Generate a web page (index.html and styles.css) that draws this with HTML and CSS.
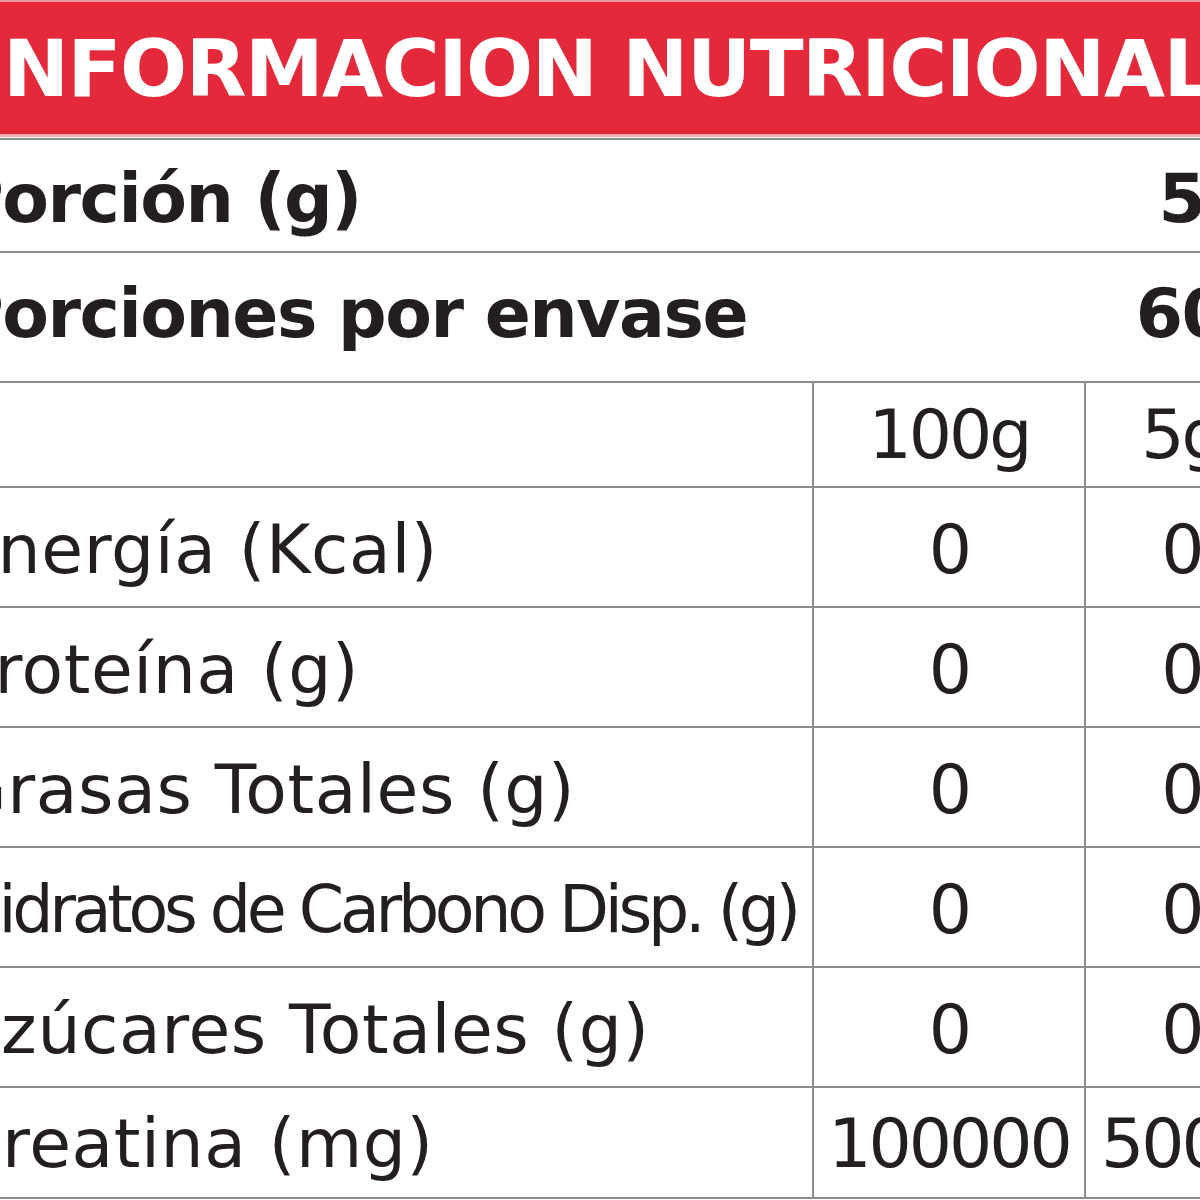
FILE: index.html
```html
<!DOCTYPE html>
<html lang="es">
<head>
<meta charset="utf-8">
<link rel="stylesheet" href="styles.css">
</head>
<body>
<div class="viewport">
  <div class="sheet">
    <div class="title-wrap">
      <div class="title">INFORMACION NUTRICIONAL</div>
    </div>
    <div class="row bold r-portion">
      <div class="lbl span2">Porción (g)</div>
      <div class="val">5</div>
    </div>
    <div class="row bold r-portions">
      <div class="lbl span2">Porciones por envase</div>
      <div class="val">60</div>
    </div>
    <div class="row thead">
      <div class="lbl"></div>
      <div class="num bl">100g</div>
      <div class="num bl c3">5g</div>
    </div>
    <div class="row data">
      <div class="lbl">Energía (Kcal)</div>
      <div class="num bl">0</div>
      <div class="num bl c3">0</div>
    </div>
    <div class="row data">
      <div class="lbl">Proteína (g)</div>
      <div class="num bl">0</div>
      <div class="num bl c3">0</div>
    </div>
    <div class="row data">
      <div class="lbl">Grasas Totales (g)</div>
      <div class="num bl">0</div>
      <div class="num bl c3">0</div>
    </div>
    <div class="row data">
      <div class="lbl narrow">Hidratos de Carbono Disp. (g)</div>
      <div class="num bl">0</div>
      <div class="num bl c3">0</div>
    </div>
    <div class="row data">
      <div class="lbl">Azúcares Totales (g)</div>
      <div class="num bl">0</div>
      <div class="num bl c3">0</div>
    </div>
    <div class="row data last">
      <div class="lbl">Creatina (mg)</div>
      <div class="num bl">100000</div>
      <div class="num bl c3">5000</div>
    </div>
  </div>
</div>
</body>
</html>
```
FILE: styles.css
```css
html, body {
  margin: 0;
  padding: 0;
  background: #ffffff;
  overflow: hidden;
}

.viewport {
  width: 1200px;
  height: 1200px;
  overflow: hidden;
  background: #ffffff;
}

.sheet {
  width: 1347px;
  margin-left: -60px;
  font-family: "DejaVu Sans", "Liberation Sans", sans-serif;
  color: #231f20;
}

.title-wrap {
  box-sizing: border-box;
  height: 140px;
  border-bottom: 2px solid #8c8c8c;
  padding-bottom: 1px;
  background: #ffffff;
}

.title {
  box-sizing: border-box;
  height: 137px;
  background: #e4293b;
  border-top: 2px solid #f29aa3;
  border-bottom: 3px solid #f3aab1;
  color: #ffffff;
  font-weight: bold;
  font-size: 79px;
  letter-spacing: -1.5px;
  white-space: nowrap;
  display: flex;
  align-items: center;
  padding-left: 35px;
  padding-top: 2px;
}

.row {
  box-sizing: border-box;
  display: grid;
  grid-template-columns: 872px 272px 203px;
  border-bottom: 2px solid #8c8c8c;
}

.r-portion { height: 113px; padding-top: 5px; }
.r-portions { height: 130px; padding-bottom: 8px; }
.thead { height: 105px; }
.data { height: 120px; }
.data.last { height: 111px; }

.data > div { padding-top: 4px; }
.data.last > div { padding-top: 2px; }

.lbl {
  display: flex;
  align-items: center;
  padding-left: 14px;
  white-space: nowrap;
  font-size: 68px;
  letter-spacing: 0.6px;
}

.span2 { grid-column: 1 / 3; }

.bold .lbl,
.bold .val {
  font-weight: bold;
  font-size: 68px;
  letter-spacing: -1.5px;
}

.val {
  display: flex;
  align-items: center;
  justify-content: center;
  padding-right: 8px;
}

.num {
  box-sizing: border-box;
  display: flex;
  align-items: center;
  justify-content: center;
  font-size: 68px;
  letter-spacing: -3px;
  white-space: nowrap;
}

.c3 {
  padding-right: 10px;
}

.bl {
  border-left: 2px solid #8c8c8c;
}

.lbl.narrow {
  font-size: 65px;
  letter-spacing: -4.3px;
}
```
